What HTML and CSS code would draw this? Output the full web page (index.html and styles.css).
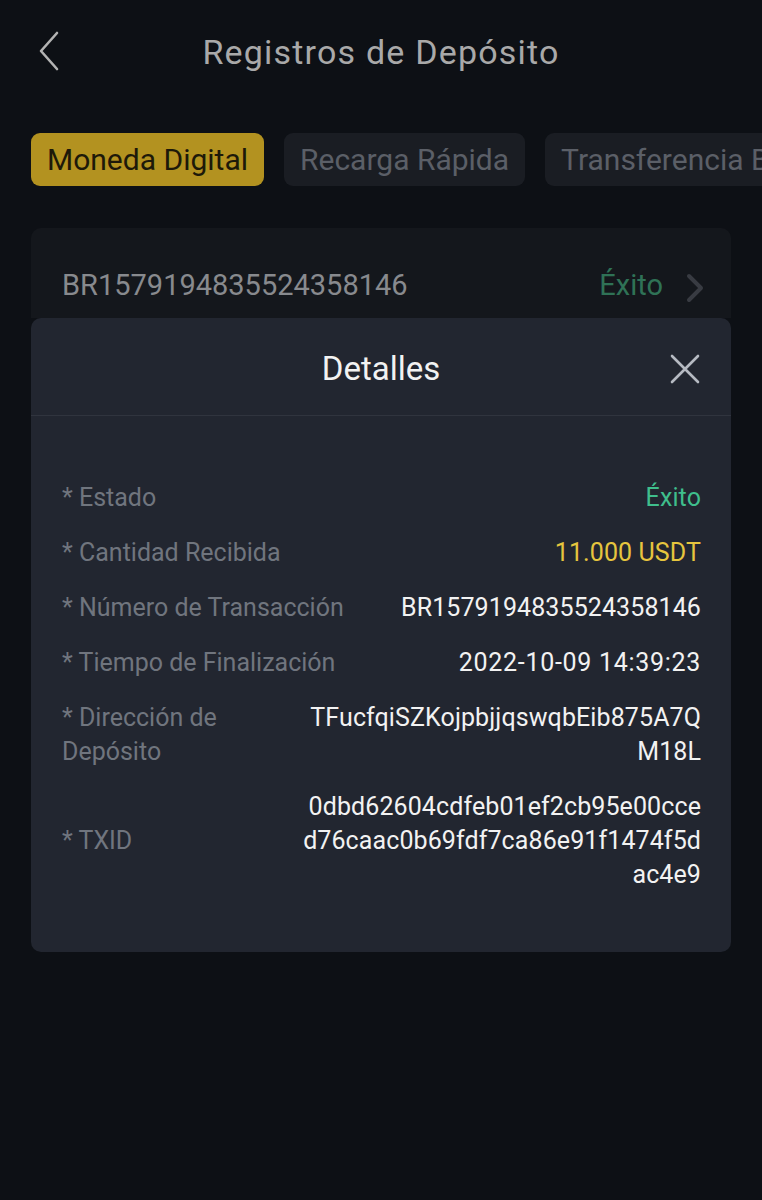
FILE: index.html
```html
<!DOCTYPE html>
<html lang="es">
<head>
    <meta charset="UTF-8">
    <meta name="viewport" content="width=device-width, initial-scale=1.0">
    <title>Registros de Depósito</title>
    <link rel="stylesheet" href="styles.css">
</head>
<body>
    <div class="page">
        <div class="topbar">
            <svg class="back" width="22" height="40" viewBox="0 0 22 40">
                <polyline points="19,2 3,20 19,38" fill="none" stroke="#b3b3b3" stroke-width="2.6" stroke-linecap="round" stroke-linejoin="round"/>
            </svg>
            <h1 class="title">Registros de Depósito</h1>
        </div>

        <div class="tabs">
            <div class="tab active">Moneda Digital</div>
            <div class="tab">Recarga Rápida</div>
            <div class="tab">Transferencia Bancaria</div>
        </div>

        <div class="record">
            <span class="record-id">BR1579194835524358146</span>
            <span class="record-status">Éxito</span>
            <svg class="record-arrow" width="20" height="30" viewBox="0 0 20 30">
                <polyline points="4,3 16,15 4,27" fill="none" stroke="#383b42" stroke-width="4" stroke-linecap="round" stroke-linejoin="round"/>
            </svg>
        </div>

        <!-- details dialog, sits over the list -->
        <div class="modal">
            <div class="modal-head">
                <span class="modal-title">Detalles</span>
                <svg class="close" width="32" height="32" viewBox="0 0 32 32">
                    <path d="M3 3 L29 29 M29 3 L3 29" stroke="#b6bac2" stroke-width="2.6" stroke-linecap="round"/>
                </svg>
            </div>
            <div class="modal-body">
                <div class="row">
                    <div class="label">* Estado</div>
                    <div class="value green">Éxito</div>
                </div>
                <div class="row">
                    <div class="label">* Cantidad Recibida</div>
                    <div class="value yellow">11.000 USDT</div>
                </div>
                <div class="row">
                    <div class="label">* Número de Transacción</div>
                    <div class="value">BR1579194835524358146</div>
                </div>
                <div class="row">
                    <div class="label">* Tiempo de Finalización</div>
                    <div class="value date">2022-10-09 14:39:23</div>
                </div>
                <div class="row top">
                    <div class="label">* Dirección de<br>Depósito</div>
                    <div class="value">TFucfqiSZKojpbjjqswqbEib875A7Q<br>M18L</div>
                </div>
                <div class="row">
                    <div class="label">* TXID</div>
                    <div class="value">0dbd62604cdfeb01ef2cb95e00cce<br>d76caac0b69fdf7ca86e91f1474f5d<br>ac4e9</div>
                </div>
            </div>
        </div>
    </div>
</body>
</html>
```

FILE: styles.css
```css
body {
    margin: 0;
    background-color: #0d1015;
    font-family: Roboto, "Noto Sans", sans-serif;
    width: 762px;
    height: 1200px;
    overflow: hidden;
}
.page {
    position: relative;
    height: 1200px;
}

.topbar {
    position: relative;
    height: 103px;
    display: flex;
    align-items: center;
    justify-content: center;
}
.back {
    position: absolute;
    left: 38px;
    top: 31px;
}
.title {
    margin: 0;
    font-weight: 400;
    font-size: 34px;
    color: #a9a9a9;
    letter-spacing: 1.2px;
}

.tabs {
    display: flex;
    gap: 20px;
    margin-top: 30px;
    padding-left: 31px;
    white-space: nowrap;
    overflow: hidden;
}
.tab {
    flex: none;
    height: 53px;
    line-height: 53px;
    padding: 0 16px;
    border-radius: 9px;
    background-color: #1a1d23;
    color: #5b5f67;
    font-size: 30px;
}
.tab.active {
    background-color: #b39220;
    color: #1d1909;
}

.record {
    margin: 42px 31px 0;
    height: 90px;
    padding: 28px 26px 0 31px;
    box-sizing: border-box;
    display: flex;
    align-items: center;
    background-color: #14171c;
    border-radius: 10px 10px 0 0;
}
.record-id {
    flex: 1;
    font-size: 29px;
    color: #888a8e;
    padding-bottom: 4px;
}
.record-status {
    font-size: 29px;
    color: #2f7256;
    margin-right: 22px;
    padding-bottom: 4px;
}
.record-arrow {
    margin-top: 2px;
}

.modal {
    position: absolute;
    left: 31px;
    top: 318px;
    width: 700px;
    height: 634px;
    background-color: #222630;
    border-radius: 10px;
}
.modal-head {
    position: relative;
    height: 97px;
    border-bottom: 1px solid #30343e;
    display: flex;
    align-items: center;
    justify-content: center;
}
.modal-title {
    font-size: 33px;
    color: #f2f2f2;
    padding-top: 4px;
}
.close {
    position: absolute;
    right: 30px;
    top: 35px;
}

.modal-body {
    padding: 65px 30px 0 31px;
    display: flex;
    flex-direction: column;
    gap: 21px;
}
.row {
    display: flex;
    justify-content: space-between;
    align-items: center;
    font-size: 25px;
    line-height: 34px;
}
.row.top {
    align-items: flex-start;
}
.label {
    color: #70757e;
    white-space: nowrap;
}
.value {
    color: #f2f2f2;
    text-align: right;
    white-space: nowrap;
    letter-spacing: 0.1px;
}
.value.date {
    letter-spacing: 0.7px;
}
.value.green {
    color: #3fbe8c;
}
.value.yellow {
    color: #e6c53e;
}
```
